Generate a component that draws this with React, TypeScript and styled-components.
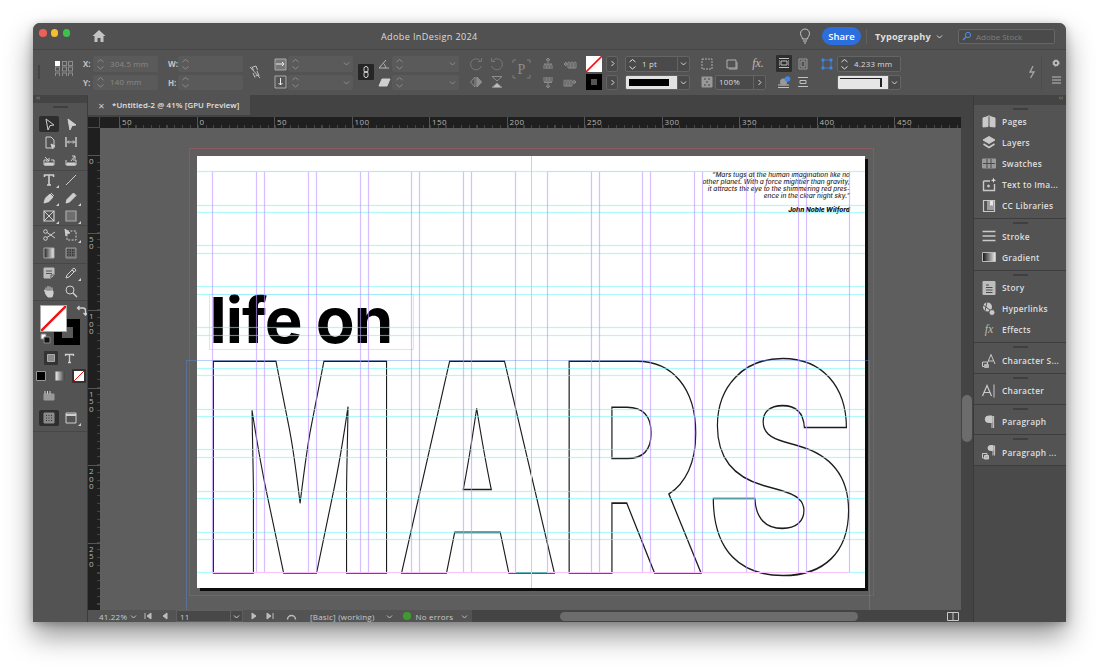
import styled, { createGlobalStyle } from "styled-components";
import { ReactNode } from "react";

const GlobalStyle = createGlobalStyle`
  html, body {
    margin: 0;
    padding: 0;
    background: #fff;
    overflow: hidden;
    font-family: "Open Sans", "Liberation Sans", sans-serif;
  }
  * { box-sizing: border-box; }
`;

const Screen = styled.div`
  width: 1100px;
  height: 667px;
  padding: 23px 34px 45px 33px;
`;

const Win = styled.div`
  height: 599px;
  display: flex;
  flex-direction: column;
  background: #535353;
  border-radius: 7px 7px 0 0;
  box-shadow: 0 14px 28px rgba(0, 0, 0, 0.42), 0 2px 8px rgba(0, 0, 0, 0.25);
  overflow: hidden;
  color: #d6d6d6;
`;

const IconSvg = styled.svg`
  display: block;
  flex: none;
`;
const IconSlot = styled.span<{ $mt?: number; $ml?: number; $mr?: number; $c?: string; $w?: number }>`
  display: block;
  flex: none;
  margin: ${(p) => p.$mt ?? 0}px ${(p) => p.$mr ?? 0}px 0 ${(p) => p.$ml ?? 0}px;
  ${(p) => (p.$c ? `color: ${p.$c};` : "")}
  ${(p) => (p.$w ? `width: ${p.$w}px;` : "")}
`;

/* ---- title bar ---- */
const TitleBar = styled.div`
  height: 27px;
  flex: none;
  display: flex;
  align-items: center;
  background: #515151;
  border-bottom: 1px solid #454545;
`;
const Light = styled.span<{ $c: string; $ml: number }>`
  width: 7.5px;
  height: 7.5px;
  border-radius: 50%;
  background: ${(p) => p.$c};
  margin: -6px 0 0 ${(p) => p.$ml}px;
`;
const TitleText = styled.div`
  width: 96px;
  margin-left: 275px;
  margin-right: auto;
  white-space: nowrap;
  font-size: 9.1px;
  letter-spacing: 0.35px;
  color: #dcdcdc;
`;
const ShareButton = styled.div`
  width: 39px;
  height: 18px;
  border-radius: 9px;
  background: #2b6fdf;
  color: #fff;
  font-size: 9.5px;
  font-weight: 600;
  display: flex;
  align-items: center;
  justify-content: center;
  margin: 0 5px 0 10px;
`;
const TitleDivider = styled.span`
  width: 1px;
  height: 15px;
  background: #616161;
`;
const Workspace = styled.div`
  font-size: 9.2px;
  font-weight: 700;
  letter-spacing: 0.2px;
  color: #dfdfdf;
  margin-left: 8px;
  width: 61px;
  white-space: nowrap;
`;
const StockField = styled.div`
  width: 97px;
  height: 15px;
  border: 1px solid #666;
  border-radius: 2px;
  background: #4a4a4a;
  margin: 0 11px 0 15px;
  font-size: 8px;
  color: #7f7f7f;
  display: flex;
  align-items: center;
  gap: 3px;
  padding-left: 3px;
  white-space: nowrap;
`;

/* ---- control bar ---- */
const ControlBar = styled.div`
  height: 45px;
  flex: none;
  display: flex;
  padding-top: 6px;
  background: #535353;
  color: #8d8d8d;
  font-size: 8px;
`;
const Col = styled.div<{ $ml: number; $w: number }>`
  margin-left: ${(p) => p.$ml}px;
  width: ${(p) => p.$w}px;
  display: flex;
  flex-direction: column;
  gap: 3px;
  flex: none;
`;
const CellRow = styled.div<{ $between?: boolean; $c?: string }>`
  height: 15.5px;
  display: flex;
  align-items: center;
  justify-content: ${(p) => (p.$between ? "space-between" : "flex-start")};
  ${(p) => (p.$c ? `color: ${p.$c};` : "")}
`;
const Grip = styled.div`
  margin: 9px 0 0 5px;
  width: 2px;
  height: 14px;
  background: #444;
  flex: none;
`;
const Label = styled.span`
  width: 10px;
  flex: none;
  font-size: 8px;
  font-weight: 700;
  color: #c4c4c4;
`;
const Field = styled.div<{ $dim?: boolean }>`
  flex: 1;
  height: 100%;
  display: flex;
  align-items: center;
  border-radius: 2px;
  background: ${(p) => (p.$dim ? "#5a5a5a" : "#4a4a4a")};
  border: 1px solid ${(p) => (p.$dim ? "#5a5a5a" : "#646464")};
  color: ${(p) => (p.$dim ? "#8a8a8a" : "#dcdcdc")};
  font-size: 7.9px;
  letter-spacing: 0.2px;
  white-space: nowrap;
  overflow: hidden;
`;
const MiniField = styled(Field)`
  flex: 0 0 12px;
  justify-content: center;
`;
const FieldText = styled.span`
  flex: 1;
  padding-left: 3px;
`;
const ArrowBox = styled.span<{ $dim?: boolean }>`
  width: 12px;
  height: 100%;
  flex: none;
  display: flex;
  align-items: center;
  justify-content: center;
  border-left: ${(p) => (p.$dim ? "0" : "1px solid #646464")};
  color: ${(p) => (p.$dim ? "#8d8d8d" : "#d5d5d5")};
`;
const DarkButton = styled.div`
  margin: 8px 0 0 5px;
  width: 16px;
  height: 16px;
  background: #252525;
  border-radius: 1px;
  color: #d8d8d8;
  display: flex;
  align-items: center;
  justify-content: center;
  flex: none;
`;
const ActiveSquare = styled.span`
  width: 16px;
  height: 17px;
  margin-top: -1px;
  background: #2e2e2e;
  border-radius: 1px;
  display: flex;
  align-items: center;
  justify-content: center;
`;
const Swatch = styled.span<{ $black?: boolean; $s?: number }>`
  width: ${(p) => p.$s ?? 16}px;
  height: ${(p) => p.$s ?? 16}px;
  flex: none;
  display: block;
  background: ${(p) => (p.$black ? "#000" : "#fff")};
  position: relative;
`;
const StrokePreview = styled.span`
  flex: 1;
  height: 100%;
  background: #e2e2e2;
  display: flex;
  align-items: center;
  padding: 0 8px 0 3px;
`;
const StrokeBar = styled.span`
  display: block;
  width: 100%;
  height: 7px;
  background: #000;
`;
const StrokeShape = styled.span`
  flex: 1;
  height: 100%;
  background: #e6e6e6;
  padding: 2px 6px 2px 2px;
`;
const StrokeCorner = styled.span`
  display: block;
  width: 100%;
  height: 100%;
  border-top: 1px solid #222;
  border-right: 2px solid #222;
`;
const BarRight = styled.div`
  margin-left: auto;
  display: flex;
  flex: none;
  color: #bdbdbd;
`;
const BarDivider = styled.span`
  width: 1px;
  height: 34px;
  background: #4c4c4c;
  margin: 0 4px;
`;
const GearCol = styled.div`
  width: 18px;
  margin: 0 1px;
  display: flex;
  flex-direction: column;
  align-items: center;
  gap: 8px;
`;

/* ---- main area ---- */
const Main = styled.div`
  flex: 1;
  min-height: 0;
  display: flex;
`;
const ToolColumn = styled.div`
  width: 55px;
  flex: none;
  display: flex;
  flex-direction: column;
  background: #535353;
  border-right: 1px solid #3c3c3c;
`;
const CollapseRow = styled.div<{ $right?: boolean }>`
  height: ${(p) => (p.$right ? 10 : 8)}px;
  flex: none;
  background: #444;
  color: #9a9a9a;
  font-size: 7px;
  line-height: 6px;
  padding: 0 3px;
  text-align: ${(p) => (p.$right ? "right" : "left")};
`;
const PanelGrip = styled.div`
  width: 15px;
  height: 2px;
  background: #3f3f3f;
  margin: 3px auto 1.5px;
  flex: none;
`;
const ToolGrip = styled(PanelGrip)`
  margin-bottom: 0;
`;
const ToolSection = styled.div<{ $pt?: number; $pb?: number }>`
  display: grid;
  grid-template-columns: 22px 22px;
  justify-content: center;
  grid-auto-rows: 18px;
  padding: ${(p) => p.$pt ?? 0}px 0 ${(p) => p.$pb ?? 0}px;
  border-bottom: 1px solid #474747;
  color: #cfcfcf;
`;
const ToolCell = styled.div<{ $active?: boolean; $more?: boolean }>`
  position: relative;
  display: flex;
  align-items: center;
  justify-content: center;
  border-radius: 2px;
  margin: ${(p) => (p.$active ? "1px" : "0")};
  background: ${(p) => (p.$active ? "#2e2e2e" : "transparent")};
  &::after {
    content: "";
    display: ${(p) => (p.$more ? "block" : "none")};
    position: absolute;
    right: 1px;
    bottom: 1px;
    border-left: 3px solid transparent;
    border-bottom: 3px solid #cfcfcf;
  }
`;
const FillStroke = styled.div`
  position: relative;
  height: 43px;
  margin: 4px 0 0 7px;
  flex: none;
`;
const FillBox = styled.div`
  position: absolute;
  left: 0;
  top: 0;
  width: 27px;
  height: 27px;
  background: #fff;
  border: 1px solid #aaa;
  z-index: 1;
`;
const StrokeBox = styled.div`
  position: absolute;
  left: 14px;
  top: 14px;
  width: 26px;
  height: 26px;
  background: #000;
  display: flex;
  align-items: center;
  justify-content: center;
  &::after {
    content: "";
    width: 11px;
    height: 11px;
    background: #5a5a5a;
  }
`;
const SwapIcon = styled.div`
  position: absolute;
  left: 36px;
  top: 0;
  color: #d0d0d0;
`;
const DefaultIcon = styled.div`
  position: absolute;
  left: 0;
  top: 28px;
  z-index: 2;
  color: #ddd;
`;
const SmallRow = styled.div<{ $mt?: number; $pr?: number }>`
  display: flex;
  justify-content: center;
  align-items: center;
  height: 18px;
  gap: 5px;
  margin-top: ${(p) => p.$mt ?? 0}px;
  padding-right: ${(p) => p.$pr ?? 0}px;
  flex: none;
  color: #cfcfcf;
`;
const SmallSquare = styled.span<{ $dark?: boolean }>`
  width: 14px;
  height: 14px;
  position: relative;
  display: flex;
  align-items: center;
  justify-content: center;
  border-radius: 1px;
  background: ${(p) => (p.$dark ? "#333" : "transparent")};
`;

/* ---- document area ---- */
const DocArea = styled.div`
  flex: 1;
  min-width: 0;
  display: flex;
  flex-direction: column;
  background: #434343;
`;
const TabStrip = styled.div`
  height: 22px;
  flex: none;
  display: flex;
`;
const Tab = styled.div`
  width: 162px;
  height: 20px;
  background: #535353;
  display: flex;
  align-items: center;
  padding-left: 3px;
  color: #e2e2e2;
  font-size: 7.8px;
  font-weight: 600;
  letter-spacing: 0.12px;
  white-space: nowrap;
`;
const TabClose = styled.span`
  width: 21px;
  flex: none;
  text-align: center;
  font-size: 11px;
  font-weight: 400;
  color: #cfcfcf;
`;
const RulerRow = styled.div`
  height: 11px;
  flex: none;
  display: flex;
  background: #1f1f1f;
  padding-right: 12px;
  background-clip: content-box;
`;
const RulerCorner = styled.div`
  width: 12px;
  flex: none;
  border-right: 1px solid #4a4a4a;
  border-bottom: 1px solid #4a4a4a;
`;
const TopRuler = styled.div`
  flex: 1;
  min-width: 0;
  display: flex;
  padding-left: 19px;
  overflow: hidden;
`;
const TopCell = styled.div`
  flex: 0 0 77.5px;
  border-left: 1px solid #555;
  padding-left: 2px;
  font-size: 8px;
  line-height: 9px;
  letter-spacing: 0.4px;
  color: #b4b4b4;
  background: repeating-linear-gradient(90deg, #444 0 1px, transparent 1px 7.75px) left bottom / 100% 3px no-repeat;
`;
const CanvasRow = styled.div`
  flex: 1;
  min-height: 0;
  display: flex;
`;
const LeftRuler = styled.div`
  width: 12px;
  flex: none;
  background: #1f1f1f;
  padding-top: 27px;
  overflow: hidden;
`;
const LeftCell = styled.div`
  height: 77.5px;
  border-top: 1px solid #555;
  padding: 1px 0 0 1px;
  font-size: 8px;
  line-height: 7.6px;
  color: #b4b4b4;
  background: repeating-linear-gradient(0deg, #444 0 1px, transparent 1px 7.75px) right top / 3px 100% no-repeat;
`;
const Digit = styled.div``;
const Canvas = styled.div`
  flex: 1;
  position: relative;
  overflow: hidden;
  background: #5e5e5e;
`;
const BleedBox = styled.div`
  position: absolute;
  left: 89px;
  top: 20px;
  width: 685px;
  height: 448px;
  border: 1px solid #8a5a62;
`;
const SlugFrame = styled.div`
  position: absolute;
  left: 86px;
  top: 232px;
  width: 684px;
  height: 300px;
  border: 1px solid rgba(90, 140, 230, 0.42);
  z-index: 3;
`;
const Page = styled.div`
  position: absolute;
  left: 97px;
  top: 28px;
  width: 668px;
  height: 432px;
  background: #fff;
  box-shadow: 3px 3px 0 #0c0c0c;
`;
const Spine = styled.div`
  position: absolute;
  left: 334px;
  top: 0;
  bottom: 0;
  width: 1px;
  background: #d0d0d0;
  z-index: 3;
`;
const GuideH = styled.div<{ $y: number }>`
  position: absolute;
  left: 0;
  right: 0;
  top: ${(p) => p.$y}px;
  height: 1px;
  background: rgba(120, 245, 250, 0.6);
  box-shadow: 0 0 1px rgba(120, 245, 250, 0.55);
  z-index: 2;
`;
const GuideV = styled.div<{ $x: number }>`
  position: absolute;
  left: ${(p) => p.$x}px;
  top: 15px;
  height: 401px;
  width: 1px;
  background: rgba(190, 150, 255, 0.62);
  box-shadow: 0 0 1px rgba(190, 150, 255, 0.5);
  z-index: 2;
`;
const Margin = styled.div<{ $x: number; $w: number; $y: number }>`
  position: absolute;
  left: ${(p) => p.$x}px;
  width: ${(p) => p.$w}px;
  top: ${(p) => p.$y}px;
  height: 1px;
  background: #f8c4fb;
  z-index: 2;
`;
const Quote = styled.div`
  position: absolute;
  right: 15px;
  top: 16px;
  width: 180px;
  text-align: right;
  font-family: Inter, "Liberation Sans", sans-serif;
  font-style: italic;
  font-size: 6.5px;
  line-height: 7.1px;
  font-weight: 500;
  color: #2c2c2c;
  white-space: pre-line;
`;
const Author = styled.div`
  margin-top: 6.7px;
  font-weight: 800;
  color: #111;
`;
const LifeFrame = styled.div`
  position: absolute;
  left: 12px;
  top: 138px;
  width: 205px;
  height: 56px;
  border: 1px solid #d6e4ff;
`;
const LifeText = styled.div`
  position: absolute;
  left: 12.5px;
  top: 124px;
  font-family: Inter, "Liberation Sans", sans-serif;
  font-weight: 700;
  font-size: 63.5px;
  line-height: 79px;
  letter-spacing: -1px;
  color: #000;
  white-space: nowrap;
`;
const OutlineLetter = styled.div<{ $x: number; $y: number; $sx: number; $sy: number }>`
  position: absolute;
  left: ${(p) => p.$x}px;
  top: ${(p) => p.$y}px;
  font-family: Inter, "Liberation Sans", sans-serif;
  font-weight: 900;
  font-size: 291px;
  line-height: 291px;
  color: transparent;
  -webkit-text-stroke: 1.6px #1c1c1c;
  transform-origin: left top;
  transform: scale(${(p) => p.$sx}, ${(p) => p.$sy});
`;
const VScroll = styled.div`
  width: 12px;
  flex: none;
  background: #444;
  padding: 267px 1px 0;
`;
const VThumb = styled.div`
  height: 47px;
  border-radius: 5px;
  background: #6c6c6c;
`;
const StatusBar = styled.div`
  height: 12px;
  flex: none;
  display: flex;
  align-items: center;
  background: #535353;
  font-size: 8px;
  letter-spacing: 0.2px;
  color: #c9c9c9;
  white-space: nowrap;
`;
const StatusText = styled.span<{ $ml: number; $w: number }>`
  margin-left: ${(p) => p.$ml}px;
  width: ${(p) => p.$w}px;
  flex: none;
`;
const StatusIcon = styled.span<{ $ml: number }>`
  margin-left: ${(p) => p.$ml}px;
  flex: none;
  display: flex;
  color: #bdbdbd;
`;
const PageField = styled.div`
  margin-left: 8px;
  width: 67px;
  height: 12px;
  flex: none;
  display: flex;
  align-items: center;
  background: #484848;
  border: 1px solid #5f5f5f;
  padding-left: 3px;
`;
const PageNum = styled.span`
  flex: 1;
`;
const GreenDot = styled.span`
  margin-left: 10.5px;
  width: 7.5px;
  height: 7.5px;
  border-radius: 50%;
  background: #3f9a2f;
  flex: none;
`;
const HScroll = styled.div`
  margin-left: 3.5px;
  flex: 1;
  height: 100%;
  background: #444;
  padding: 1px 0 1px 88px;
  display: flex;
  align-items: center;
`;
const HThumb = styled.div`
  width: 298px;
  height: 9px;
  border-radius: 5px;
  background: #6c6c6c;
`;
const HScrollEnd = styled.span`
  margin-left: auto;
  margin-right: 14px;
  display: flex;
  color: #c8c8c8;
`;

/* ---- dock ---- */
const Dock = styled.div`
  width: 93px;
  flex: none;
  display: flex;
  flex-direction: column;
  background: #4a4a4a;
  border-left: 1px solid #3a3a3a;
`;
const DockGroup = styled.div`
  flex: none;
  background: #535353;
  border-bottom: 1px solid #3d3d3d;
  padding-bottom: 2.3px;
`;
const DockItem = styled.div`
  height: 20.9px;
  display: flex;
  align-items: center;
  color: #c9c9c9;
  padding-left: 7px;
`;
const DockIcon = styled.span`
  width: 21px;
  flex: none;
  display: flex;
`;
const DockLabel = styled.span`
  font-size: 8.4px;
  font-weight: 600;
  letter-spacing: 0.25px;
  color: #dedede;
  white-space: nowrap;
`;
const FxGlyph = styled.span`
  width: 16px;
  font-family: "Liberation Serif", serif;
  font-style: italic;
  font-size: 12px;
  color: #bbb;
  text-align: center;
`;
const SlashSvg = styled.svg`
  position: absolute;
  left: 0;
  top: 0;
  display: block;
`;

/* ---- icons ---- */
const Svg = ({ w = 14, h = 14, children, fill = "none" }: { w?: number; h?: number; children: ReactNode; fill?: string }) => (
  <IconSvg width={w} height={h} viewBox={`0 0 ${w} ${h}`} fill={fill} stroke="currentColor" strokeWidth={1}>
    {children}
  </IconSvg>
);
const Chevron = ({ right }: { right?: boolean }) => (
  <Svg w={7} h={7}>
    <path d={right ? "M2.5 1l2.5 2.5L2.5 6" : "M1 2.5l2.5 2.5L6 2.5"} />
  </Svg>
);
const Stepper = () => (
  <Svg w={13} h={14}>
    <path d="M3.5 5L6.5 2.5 9.5 5M3.5 9.5L6.5 12 9.5 9.5" />
  </Svg>
);
const StepField = ({ text, dim, chevron }: { text?: string; dim?: boolean; chevron?: boolean }) => (
  <Field $dim={dim}>
    <Stepper />
    <FieldText>{text}</FieldText>
    {chevron && <ArrowBox $dim={dim}><Chevron /></ArrowBox>}
  </Field>
);
const NoneSlash = ({ s }: { s: number }) => (
  <SlashSvg width={s} height={s} viewBox="0 0 16 16">
    <path d="M0 16L16 0" stroke="#f01414" strokeWidth={1.6} />
  </SlashSvg>
);

const icons: Record<string, ReactNode> = {
  select: <path d="M4 2l8 6-4 .6L6 13z" />,
  direct: <path d="M4 2l8 6-4 .6L6 13z" fill="#d0d0d0" />,
  page: <><path d="M4 2h5l3 3v8H4z" /><path d="M9 9l4 2-2 .5-.5 2z" fill="currentColor" /></>,
  gap: <><path d="M2 2v10M12 2v10" strokeWidth={1.4} /><path d="M3.5 7h7M5 5.5L3.5 7 5 8.5M9 5.5L10.5 7 9 8.5" /></>,
  collect: <><path d="M2 7v5h10V7H9M5 7H2" /><path d="M3 4l4 4M7 5v3H4" /><path d="M3 10h8v2H3z" fill="currentColor" /></>,
  place: <><path d="M2 7v5h10V7H9" /><path d="M7 8l4-5M8 3h3v3" /><path d="M3 10h8v2H3z" fill="currentColor" /></>,
  type: <path d="M2.5 4V2h9v2M7 2v10M5 12h4" strokeWidth={1.6} />,
  line: <path d="M2 12L12 2" />,
  pen: <path d="M2 12l1.5-5L8 3l3 3-4 4.5zM2 12l3-3M9 2l3 3" fill="#cfcfcf" stroke="#cfcfcf" />,
  pencil: <path d="M2 12l1-3.5L9.5 2 12 4.5 5.5 11z" fill="#cfcfcf" />,
  frame: <><path d="M2 2h10v10H2z" strokeWidth={1.2} /><path d="M2 2l10 10M12 2L2 12" /></>,
  rect: <path d="M2 2h10v10H2z" fill="#6e6e6e" stroke="#aaa" strokeWidth={1.2} />,
  scissors: <><circle cx="3.5" cy="3.5" r="1.8" /><circle cx="3.5" cy="10.5" r="1.8" /><path d="M5 4.5L13 10M5 9.5L13 4" /></>,
  freeT: <><path d="M3 3h9v9H3z" strokeDasharray="2 1.4" /><path d="M1 1l5 4-3 .5L2 8z" fill="currentColor" /></>,
  gradient: <><defs><linearGradient id="gr"><stop offset="0" stopColor="#222" /><stop offset="1" stopColor="#eee" /></linearGradient></defs><path d="M2 2h10v10H2z" fill="url(#gr)" stroke="#aaa" /></>,
  feather: <><path d="M2 2h10v10H2z" fill="#6a6a6a" stroke="#999" /><path d="M3 4h8M3 6.5h8M3 9h8" stroke="#333" strokeWidth={1.4} strokeDasharray="1.5 1" /></>,
  note: <><path d="M2 2h10v7l-3 3H2z" fill="#bcbcbc" stroke="#bcbcbc" /><path d="M4 5h6M4 7.5h6" stroke="#535353" /><path d="M9 12V9h3" stroke="#535353" /></>,
  dropper: <path d="M2 12l1-3 5-5 2 2-5 5zM8 3.5l2-1.5 2 2-1.5 2z" />,
  hand: <path d="M4 7V3.5M6 6.5V2M8 6.5V2.5M10 7V3.5M4 7L2.5 6 4 10.5 6 13h4l1-3V7z" fill="#cfcfcf" stroke="#cfcfcf" />,
  zoom: <><circle cx="6" cy="6" r="4" /><path d="M9 9l4 4" strokeWidth={1.5} /></>,
  screen: <><path d="M2 5h10v6H2z" fill="#999" stroke="#999" /><path d="M3 2v3M5.5 2v3M8 2v3" /></>,
  normal: <><path d="M2 2h10v10H2z" fill="#8a8a8a" stroke="#8a8a8a" /><path d="M4 4.500h1M6.500 4.500h1M9 4.500h1M4 7h1M6.500 7h1M9 7h1M4 9.500h1M6.500 9.500h1M9 9.500h1" stroke="#333" /></>,
  view: <><path d="M2 2h10v10H2z" /><path d="M2 4h10" strokeWidth={2} /></>,
};
const Tool = ({ name, active, more }: { name: string; active?: boolean; more?: boolean }) => (
  <ToolCell $active={active} $more={more}>
    <Svg>{icons[name]}</Svg>
  </ToolCell>
);

const dockIcons: Record<string, ReactNode> = {
  Pages: <path d="M2 4l5-1.5v10L2 13zM14 4l-5-1.5v10l5 .5zM8 1v2" fill="#c9c9c9" />,
  Layers: <><path d="M8 1.5l6 3.5-6 3.5L2 5z" fill="#c9c9c9" /><path d="M2.5 9L8 12.5 13.5 9" strokeWidth={1.8} /></>,
  Swatches: <><path d="M1.5 3h13v9h-13z" fill="#9a9a9a" stroke="#9a9a9a" /><path d="M2 7.5h12M6 3v9M10 3v9" stroke="#4a4a4a" /></>,
  Text: <><path d="M2.5 4v9.5h11V7M2.5 4H9" strokeWidth={1.4} /><circle cx="7.5" cy="9" r="1" fill="#ccc" /><path d="M12.5 0.5l.7 2 2 .7-2 .7-.7 2-.7-2-2-.7 2-.7z" fill="#ddd" stroke="none" /></>,
  CC: <><path d="M2.5 2.5h11v11h-11z" strokeWidth={1.2} /><path d="M6 3v9h7V3z" fill="#9c9c9c" stroke="none" /><path d="M9 3h3v5l-1.5-1L9 8z" fill="#e6e6e6" stroke="none" /></>,
  Stroke: <path d="M1.5 3.5h13M1.5 8h13M1.5 12.500h13" strokeWidth={1.5} />,
  Gradient: <><defs><linearGradient id="gr2"><stop offset="0" stopColor="#111" /><stop offset="1" stopColor="#eee" /></linearGradient></defs><path d="M1.5 3.5h13v9h-13z" fill="url(#gr2)" stroke="#bbb" /></>,
  Story: <><path d="M2 1.5h12v13H2z" fill="#bdbdbd" stroke="#bdbdbd" /><path d="M5 5h3M5 7.5h6.5M5 10h6.5M5 12.5h6.5" stroke="#4a4a4a" /></>,
  Hyperlinks: <><circle cx="6.5" cy="6" r="4.5" fill="#c9c9c9" stroke="none" /><circle cx="11" cy="11.5" r="3" fill="#c9c9c9" stroke="#535353" /><path d="M2 4l7 5M6 1l-2 9" stroke="#535353" /></>,
  CharS: <><path d="M6 12L10 2.5 14 12M7.5 9h5" /><path d="M1.5 10h5v4.500h-5z" /><path d="M3.5 12.5h4v3h-4z" fill="#b5b5b5" stroke="#b5b5b5" /></>,
  Char: <><path d="M1.5 13L6 2.5 10.500 13M3.200 9.500h5.600" strokeWidth={1.2} /><path d="M13 1.500v13" /></>,
  Para: <><path d="M11 2v12M12.600 2v12" /><path d="M11 2H7.500a3 3 0 000 6.500H11z" fill="#c9c9c9" stroke="#c9c9c9" /></>,
  ParaS: <><path d="M12 1.500v10M13.600 1.500v10" /><path d="M12 1.500H9.500a2.300 2.300 0 000 5H12z" fill="#c9c9c9" /><path d="M1.500 9.500h4.500v4.500h-4.500z" /><path d="M3.500 11.500h4v3.500h-4z" fill="#b5b5b5" /></>,
};

const dockGroups: { key: string; label: string }[][] = [
  [
    { key: "Pages", label: "Pages" },
    { key: "Layers", label: "Layers" },
    { key: "Swatches", label: "Swatches" },
    { key: "Text", label: "Text to Ima..." },
    { key: "CC", label: "CC Libraries" },
  ],
  [
    { key: "Stroke", label: "Stroke" },
    { key: "Gradient", label: "Gradient" },
  ],
  [
    { key: "Story", label: "Story" },
    { key: "Hyperlinks", label: "Hyperlinks" },
    { key: "Effects", label: "Effects" },
  ],
  [{ key: "CharS", label: "Character S..." }],
  [{ key: "Char", label: "Character" }],
  [{ key: "Para", label: "Paragraph" }],
  [{ key: "ParaS", label: "Paragraph ..." }],
];

const hGuides = [15, 48.5, 56, 89, 96.7, 130.3, 138, 171, 178.7, 211.7, 219.3, 252.7, 260.3, 293.3, 301, 334.7, 342.3, 375.7, 383.3, 416];
const vGuides = [15.3, 59.3, 67.3, 111.3, 119, 163, 170.7, 214.3, 222.3, 266.3, 274.3, 318.3, 350, 393.7, 401.7, 445, 453, 497, 505, 548.7, 556.7, 600.7, 608.7, 652.3];
const topLabels = ["50", "0", "50", "100", "150", "200", "250", "300", "350", "400", "450"];
const leftLabels = ["0", "50", "100", "150", "200", "250"];
const letters = [
  { ch: "M", x: 6.8, y: 166, sx: 0.69, sy: 1 },
  { ch: "A", x: 200, y: 166, sx: 0.7, sy: 1 },
  { ch: "R", x: 362.4, y: 166, sx: 0.745, sy: 1 },
  { ch: "S", x: 509.9, y: 166, sx: 0.763, sy: 1 },
];

export default function App() {
  return (
    <Screen>
      <GlobalStyle />
      <Win>
        <TitleBar>
          <Light $c="#ee5f57" $ml={6} />
          <Light $c="#f5bd2f" $ml={4} />
          <Light $c="#3fc04b" $ml={4.5} />
          <IconSlot $ml={22} $c="#c4c4c4">
            <Svg w={14} h={14} fill="currentColor"><path d="M7 1L0.5 7H2.5V13H5.5V9H8.5V13H11.5V7H13.5Z" stroke="none" /></Svg>
          </IconSlot>
          <TitleText>Adobe InDesign 2024</TitleText>
          <IconSlot $c="#c8c8c8">
            <Svg w={14} h={16}><path d="M4.5 11c0-2-2-3-2-5.500a4.500 4.500 0 019 0c0 2.500-2 3.500-2 5.500zM5 13h4M6 15h2" /></Svg>
          </IconSlot>
          <ShareButton>Share</ShareButton>
          <TitleDivider />
          <Workspace>Typography</Workspace>
          <Chevron />
          <StockField>
            <IconSlot $c="#4f8fe8">
              <Svg w={11} h={10}><circle cx="6" cy="4" r="2.600" /><path d="M4 6L1 9" strokeWidth={1.3} /></Svg>
            </IconSlot>
            Adobe Stock
          </StockField>
        </TitleBar>

        <ControlBar>
          <Grip />
          <Col $ml={15} $w={19}>
            <Svg w={19} h={20}>
              <g transform="translate(0 5)">
                <rect x=".5" y=".5" width="4" height="4" fill="#fff" stroke="#fff" />
                {[7.5, 13.5].map((x) => <rect key={x} x={x} y=".5" width="4" height="4" />)}
                {[6, 12].map((y) => [0.5, 7.5, 13.5].map((x) => <rect key={`${x}-${y}`} x={x} y={y} width="4" height="4" />))}
              </g>
            </Svg>
          </Col>
          <Col $ml={9} $w={75}>
            <CellRow><Label>X:</Label><StepField dim text="304.5 mm" /></CellRow>
            <CellRow><Label>Y:</Label><StepField dim text="140 mm" /></CellRow>
          </Col>
          <Col $ml={10} $w={75}>
            <CellRow><Label>W:</Label><StepField dim /></CellRow>
            <CellRow><Label>H:</Label><StepField dim /></CellRow>
          </Col>
          <Col $ml={5} $w={14}>
            <IconSlot $mt={8} $c="#c0c0c0">
              <Svg w={14} h={16}><path d="M4 2.500l1.500 4M5 9l2 4.500M9 7l2 5M5 3l3-1 1.500 4M7.500 12l3-1M2 3l10 11" /></Svg>
            </IconSlot>
          </Col>
          <Col $ml={11} $w={80}>
            <CellRow>
              <Svg w={15} h={14}><path d="M2 2h11v11H2z" fill="#777" stroke="#aaa" /><path d="M3 7h8M9 5l2 2-2 2" stroke="#eee" /></Svg>
              <StepField dim chevron />
            </CellRow>
            <CellRow>
              <Svg w={15} h={14}><path d="M2 1h11v12H2z" fill="#555" stroke="#aaa" /><path d="M7.500 3v7M5.500 8l2 2 2-2" stroke="#eee" /></Svg>
              <StepField dim chevron />
            </CellRow>
          </Col>
          <DarkButton>
            <Svg w={8} h={14}><rect x="2" y="1.500" width="4" height="6" rx="2" /><rect x="2" y="6.500" width="4" height="6" rx="2" /></Svg>
          </DarkButton>
          <Col $ml={3} $w={82}>
            <CellRow $c="#b5b5b5">
              <Svg w={15} h={14}><path d="M12 11H2L9 3M6.500 6.500c1.200.8 2 2.500 2 4.500" /></Svg>
              <StepField dim chevron />
            </CellRow>
            <CellRow>
              <Svg w={15} h={14}><path d="M2 11l3-7h8l-3 7z" fill="#cfcfcf" stroke="#cfcfcf" /></Svg>
              <StepField dim chevron />
            </CellRow>
          </Col>
          <Col $ml={10} $w={35}>
            <CellRow $between $c="#777">
              <Svg><path d="M11.500 4a5.500 5.500 0 10.800 5M12.500 1v3.500H9" /></Svg>
              <Svg><path d="M2.500 4a5.500 5.500 0 11-.8 5M1.500 1v3.500H5" /></Svg>
            </CellRow>
            <CellRow $between>
              <Svg><path d="M6 2L1.500 7 6 12zM8 2l4.500 5L8 12z" /><path d="M8 2l4.500 5L8 12z" fill="#8d8d8d" /></Svg>
              <Svg><path d="M2 1.500l5 4.500 5-4.500z" /><path d="M2 12.500L7 8l5 4.500z" fill="#bdbdbd" /></Svg>
            </CellRow>
          </Col>
          <Col $ml={8} $w={18}>
            <IconSlot $mt={2} $c="#7c7c7c">
              <Svg w={19} h={22}>
                <path d="M1 5V2h3M15 2h3v3M1 17v3h3M18 17v3h-3" />
                <text x="9.500" y="15.500" textAnchor="middle" fontFamily="Liberation Serif" fontSize="14" fill="#8d8d8d" stroke="none">P</text>
              </Svg>
            </IconSlot>
          </Col>
          <Col $ml={11} $w={36}>
            <CellRow $between>
              <Svg><path d="M7 1l2 2H5zM7 3v3M3 12V8.500a1 1 0 012 0V12M6 12V8.500a1 1 0 012 0V12M9 12V8.500a1 1 0 012 0V12M3 7h8" /></Svg>
              <Svg><path d="M1 7l2-2v4zM3 7h2M5 11V6a1 1 0 012 0v5M8 11V6a1 1 0 012 0v5M11 11V6a1 1 0 012 0v5M5 11h8" /></Svg>
            </CellRow>
            <CellRow $between>
              <Svg><path d="M7 13l2-2H5zM7 11V8M3 2v4a1 1 0 002 0V2M6 2v4a1 1 0 002 0V2M9 2v4a1 1 0 002 0V2M3 7.500h8" /></Svg>
              <Svg><path d="M13 7l-2-2v4zM11 7H9M1 11V6a1 1 0 012 0v5M4 11V6a1 1 0 012 0v5M7 11V6a1 1 0 012 0v5M1 11h8" /></Svg>
            </CellRow>
          </Col>
          <Col $ml={9} $w={32}>
            <CellRow $between>
              <Swatch><NoneSlash s={16} /></Swatch>
              <MiniField><Chevron right /></MiniField>
            </CellRow>
            <CellRow $between>
              <Swatch $black><Svg w={16} h={16}><rect x="5" y="5" width="6" height="6" fill="#555" stroke="none" /></Svg></Swatch>
              <MiniField><Chevron right /></MiniField>
            </CellRow>
          </Col>
          <Col $ml={7} $w={65}>
            <CellRow><StepField text="1 pt" chevron /></CellRow>
            <CellRow>
              <Field><StrokePreview><StrokeBar /></StrokePreview><ArrowBox><Chevron /></ArrowBox></Field>
            </CellRow>
          </Col>
          <Col $ml={10} $w={66}>
            <CellRow $between $c="#b0b0b0">
              <Svg><path d="M2 2h10v10H2z" strokeDasharray="2 1" /></Svg>
              <Svg><path d="M2 3h9v8H2z" /><path d="M12 5v7H4" /></Svg>
              <FxGlyph>fx.</FxGlyph>
            </CellRow>
            <CellRow $c="#b0b0b0">
              <Svg w={15} h={14}><path d="M2 2h10v10H2z" fill="#999" stroke="#999" /><path d="M4 4h2M8 4h2M6 7h2M4 10h2M8 10h2" stroke="#444" /></Svg>
              <Field>
                <FieldText>100%</FieldText>
                <ArrowBox><Chevron right /></ArrowBox>
              </Field>
            </CellRow>
          </Col>
          <Col $ml={10} $w={36}>
            <CellRow $between $c="#c0c0c0">
              <ActiveSquare><Svg w={12} h={12}><path d="M1 1.500h10M1 10.500h10M3 4h6v4H3zM1 4h1M1 6h1M1 8h1M10 4h1M10 6h1M10 8h1" /></Svg></ActiveSquare>
              <IconSlot $mr={3} $c="#9a9a9a"><Svg w={12} h={12}><path d="M2 1h8v10H2zM4 3h4v6H4z" /></Svg></IconSlot>
            </CellRow>
            <CellRow $between $c="#c0c0c0">
              <IconSlot $ml={1}>
                <Svg w={14} h={13}><path d="M1 9h11M1 11.500h11" /><circle cx="6.500" cy="6" r="3.500" fill="#999" stroke="none" /><circle cx="10.500" cy="3" r="2.800" fill="#3f86e8" stroke="none" /></Svg>
              </IconSlot>
              <IconSlot $mr={3}><Svg w={12} h={12}><path d="M1 1.500h10M1 10.500h10M3 4.500h6v3H3z" /></Svg></IconSlot>
            </CellRow>
          </Col>
          <Col $ml={9} $w={80}>
            <CellRow>
              <IconSlot $w={16} $c="#3f86e8">
                <Svg w={12} h={12}><path d="M2 2h8v8H2z" strokeWidth={.8} /><path d="M1 1h2v2H1zM9 1h2v2H9zM1 9h2v2H1zM9 9h2v2H9z" fill="currentColor" /></Svg>
              </IconSlot>
              <StepField text="4.233 mm" />
            </CellRow>
            <CellRow>
              <IconSlot $w={16} />
              <Field><StrokeShape><StrokeCorner /></StrokeShape><ArrowBox><Chevron /></ArrowBox></Field>
            </CellRow>
          </Col>
          <BarRight>
            <IconSlot $mt={8} $c="#a8a8a8">
              <Svg w={10} h={16}><path d="M6 2L3 8h4L3.500 14" strokeWidth={1.300} /></Svg>
            </IconSlot>
            <BarDivider />
            <GearCol>
              <IconSlot $mt={2}>
                <Svg w={10} h={10} fill="#bdbdbd"><circle cx="5" cy="5" r="2.800" strokeWidth={1.500} strokeDasharray="1.500 .7" /><circle cx="5" cy="5" r="1.200" fill="#535353" stroke="none" /></Svg>
              </IconSlot>
              <Svg w={11} h={8}><path d="M1 1h9M1 4h9M1 7h9" /></Svg>
            </GearCol>
          </BarRight>
        </ControlBar>

        <Main>
          <ToolColumn>
            <CollapseRow>‹‹</CollapseRow>
            <ToolGrip />
            <ToolSection $pt={7} $pb={1}>
              <Tool name="select" active />
              <Tool name="direct" />
              <Tool name="page" />
              <Tool name="gap" />
              <Tool name="collect" />
              <Tool name="place" />
            </ToolSection>
            <ToolSection>
              <Tool name="type" more />
              <Tool name="line" />
              <Tool name="pen" more />
              <Tool name="pencil" more />
              <Tool name="frame" more />
              <Tool name="rect" more />
            </ToolSection>
            <ToolSection $pb={1}>
              <Tool name="scissors" />
              <Tool name="freeT" more />
              <Tool name="gradient" />
              <Tool name="feather" />
            </ToolSection>
            <ToolSection>
              <Tool name="note" />
              <Tool name="dropper" more />
              <Tool name="hand" />
              <Tool name="zoom" />
            </ToolSection>
            <FillStroke>
              <StrokeBox />
              <FillBox><NoneSlash s={25} /></FillBox>
              <SwapIcon><Svg w={11} h={12}><path d="M2 3h5a2.500 2.500 0 012.500 2.500V10M3.500 1L1.500 3l2 2M7.500 8l2 2 2-2" strokeWidth={1.300} /></Svg></SwapIcon>
              <DefaultIcon><Svg w={11} h={11}><path d="M1 1h5v5H1z" fill="#fff" stroke="#888" /><path d="M4 4h6v6H4z" fill="#111" stroke="#888" /></Svg></DefaultIcon>
            </FillStroke>
            <SmallRow $mt={1}>
              <SmallSquare $dark><Svg w={10} h={10}><path d="M1.500 1.500h7v7h-7z" fill="#888" stroke="#aaa" /></Svg></SmallSquare>
              <SmallSquare>
                <Svg w={11} h={11}><path d="M1.500 3V1.500h8V3M5.500 1.500v8M4 9.500h3" strokeWidth={1.300} /></Svg>
              </SmallSquare>
            </SmallRow>
            <SmallRow>
              <SmallSquare><Svg w={12} h={12}><path d="M1.500 1.500h9v9h-9z" fill="#000" stroke="#999" /></Svg></SmallSquare>
              <SmallSquare><Svg w={12} h={12}><defs><linearGradient id="gr3"><stop offset="0" stopColor="#eee" /><stop offset="1" stopColor="#444" /></linearGradient></defs><path d="M1.500 1.500h9v9h-9z" fill="url(#gr3)" stroke="none" /></Svg></SmallSquare>
              <SmallSquare $dark><Swatch $s={10}><NoneSlash s={10} /></Swatch></SmallSquare>
            </SmallRow>
            <SmallRow $mt={2} $pr={22}>
              <Svg>{icons.screen}</Svg>
            </SmallRow>
            <ToolSection $pt={4} $pb={4}>
              <Tool name="normal" active />
              <Tool name="view" more />
            </ToolSection>
          </ToolColumn>

          <DocArea>
            <TabStrip>
              <Tab><TabClose>×</TabClose>*Untitled-2 @ 41% [GPU Preview]</Tab>
            </TabStrip>
            <RulerRow>
              <RulerCorner />
              <TopRuler>
                {topLabels.map((l, i) => <TopCell key={i}>{l}</TopCell>)}
              </TopRuler>
            </RulerRow>
            <CanvasRow>
              <LeftRuler>
                {leftLabels.map((l) => (
                  <LeftCell key={l}>{l.split("").map((d, i) => <Digit key={i}>{d}</Digit>)}</LeftCell>
                ))}
              </LeftRuler>
              <Canvas>
                <BleedBox />
                <Page>
                  {hGuides.map((y) => <GuideH key={y} $y={y} />)}
                  {vGuides.map((x) => <GuideV key={x} $x={x} />)}
                  <Margin $x={15} $w={304} $y={15} />
                  <Margin $x={350} $w={303} $y={15} />
                  <Margin $x={15} $w={304} $y={416} />
                  <Margin $x={350} $w={303} $y={416} />
                  <Spine />
                  <Quote>
                    {"“Mars tugs at the human imagination like no\nother planet. With a force mightier than gravity,\nit attracts the eye to the shimmering red pres-\nence in the clear night sky.”"}
                    <Author>John Noble Wilford</Author>
                  </Quote>
                  <LifeFrame />
                  <LifeText>life on</LifeText>
                  {letters.map((l) => (
                    <OutlineLetter key={l.ch} $x={l.x} $y={l.y} $sx={l.sx} $sy={l.sy}>{l.ch}</OutlineLetter>
                  ))}
                </Page>
                <SlugFrame />
              </Canvas>
              <VScroll><VThumb /></VScroll>
            </CanvasRow>
            <StatusBar>
              <StatusText $ml={11} $w={27}>41.22%</StatusText>
              <StatusIcon $ml={4}><Chevron /></StatusIcon>
              <StatusIcon $ml={7}><Svg w={8} h={8} fill="currentColor"><path d="M1 1v6M7 1L3 4l4 3z" /></Svg></StatusIcon>
              <StatusIcon $ml={10}><Svg w={6} h={8} fill="currentColor"><path d="M5 1L1 4l4 3z" /></Svg></StatusIcon>
              <PageField><PageNum>11</PageNum><ArrowBox><Chevron /></ArrowBox></PageField>
              <StatusIcon $ml={8}><Svg w={6} h={8} fill="currentColor"><path d="M1 1l4 3-4 3z" /></Svg></StatusIcon>
              <StatusIcon $ml={9}><Svg w={8} h={8} fill="currentColor"><path d="M7 1v6M1 1l4 3-4 3z" /></Svg></StatusIcon>
              <StatusIcon $ml={12}><Svg w={11} h={10}><path d="M1.500 8.500a4 4 0 118 0" strokeWidth={1.500} /></Svg></StatusIcon>
              <StatusText $ml={13} $w={72}>[Basic] (working)</StatusText>
              <StatusIcon $ml={3.5}><Chevron /></StatusIcon>
              <GreenDot />
              <StatusText $ml={5} $w={42}>No errors</StatusText>
              <StatusIcon $ml={3.5}><Chevron /></StatusIcon>
              <HScroll>
                <HThumb />
                <HScrollEnd><Svg w={12} h={9}><path d="M.5 .5h11v8H.5zM6 .5v8" /></Svg></HScrollEnd>
              </HScroll>
            </StatusBar>
          </DocArea>

          <Dock>
            <CollapseRow $right>‹‹</CollapseRow>
            {dockGroups.map((g, i) => (
              <DockGroup key={i}>
                <PanelGrip />
                {g.map((d) => (
                  <DockItem key={d.label}>
                    <DockIcon>
                      {d.key === "Effects"
                        ? <FxGlyph>fx</FxGlyph>
                        : <Svg w={16} h={16}>{dockIcons[d.key]}</Svg>}
                    </DockIcon>
                    <DockLabel>{d.label}</DockLabel>
                  </DockItem>
                ))}
              </DockGroup>
            ))}
          </Dock>
        </Main>
      </Win>
    </Screen>
  );
}
